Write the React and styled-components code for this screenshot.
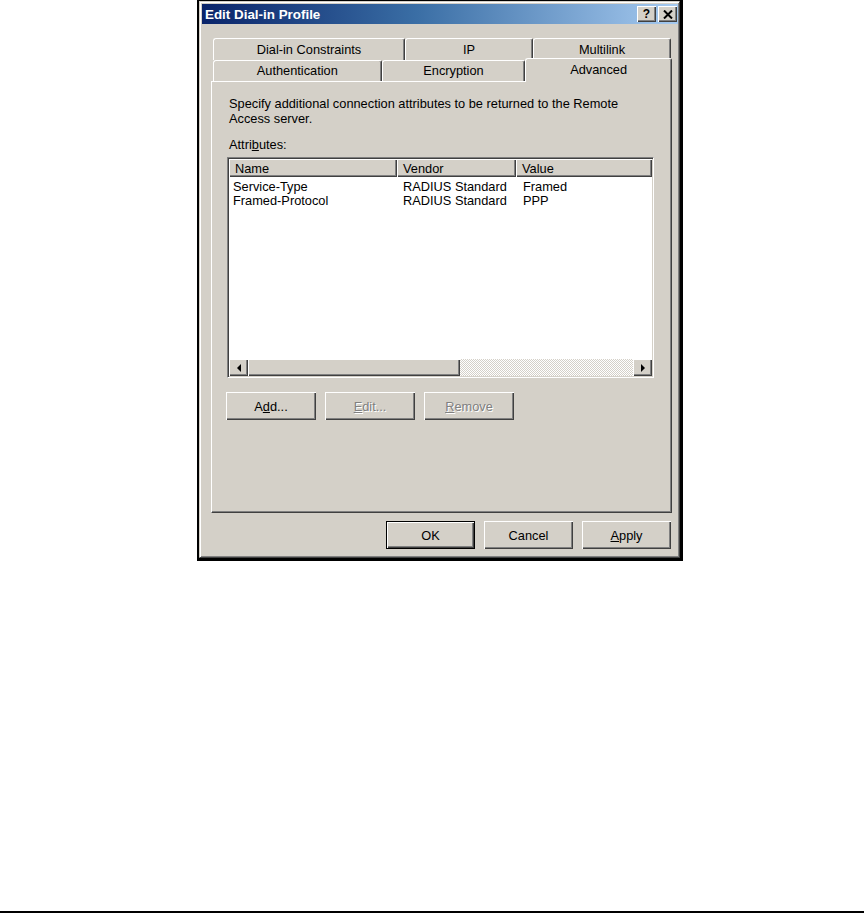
import React from 'react'
import styled, { createGlobalStyle, css } from 'styled-components'

const GlobalStyle = createGlobalStyle`
  html, body {
    margin: 0;
    padding: 0;
    background: #fff;
  }
  body {
    font-family: "Liberation Sans", Arial, sans-serif;
    font-size: 12.8px;
    color: #000;
  }
`

const Page = styled.div`
  height: 914px;
  display: flex;
  flex-direction: column;
  box-sizing: border-box;
`

const Frame = styled.div`
  margin-left: 197px;
  width: 486px;
  box-sizing: border-box;
  border: 2px solid #000;
  border-top-width: 1px;
  border-right-width: 3px;
  border-bottom-width: 3px;
`

const Window = styled.div`
  background: #d4d0c8;
  border: 1px solid;
  border-color: #d4d0c8 #404040 #404040 #d4d0c8;
  box-shadow: inset 1px 1px #fff, inset -1px -1px #808080;
  padding: 2px 1px 1px 2px;
`

const TitleBar = styled.div`
  height: 20px;
  display: flex;
  align-items: center;
  padding: 0 1px 0 3px;
  background: linear-gradient(to right, #0a246a 0%, #3a6ea5 45%, #a6caf0 100%);
`

const TitleText = styled.span`
  flex: 1;
  color: #fff;
  font-weight: bold;
  font-size: 13.4px;
`

const TitleButtons = styled.div`
  display: flex;
  gap: 2px;
`

const TitleButton = styled.div`
  width: 19px;
  height: 16px;
  box-sizing: border-box;
  background: #d4d0c8;
  box-shadow: inset 1px 1px #fff, inset -1px -1px #404040, inset -2px -2px #808080;
  display: flex;
  align-items: center;
  justify-content: center;
  font-weight: bold;
  font-size: 12px;
  line-height: 1;
`

const Body = styled.div`
  padding: 14px 6px 7px 9px;
`

const TabStrip = styled.div`
  display: flex;
  flex-direction: column;
  padding-left: 2px;
`

const TabRow = styled.div`
  display: flex;
  height: ${({ $h }) => $h}px;
`

const Tab = styled.div`
  width: ${({ $w }) => $w}px;
  box-sizing: border-box;
  background: #d4d0c8;
  border-top: 1px solid #fff;
  border-left: 1px solid #fff;
  border-right: 1px solid #404040;
  border-top-left-radius: 3px;
  border-top-right-radius: 2px;
  box-shadow: inset -1px 0 #808080;
  display: flex;
  align-items: center;
  justify-content: center;
  padding-bottom: 1px;
  ${({ $active }) => $active && css`
    position: relative;
    z-index: 1;
    margin-top: -2px;
    height: calc(100% + 3px);
    align-items: flex-start;
    padding-top: 3px;
  `}
`

const Panel = styled.div`
  height: 432px;
  box-sizing: border-box;
  border: 1px solid;
  border-color: #fff #404040 #404040 #fff;
  box-shadow: inset -1px -1px #808080;
  padding: 14px 18px 0 15px;
  display: flex;
  flex-direction: column;
`

const Description = styled.p`
  margin: 0 0 0 2px;
  line-height: 15px;
`

const FieldLabel = styled.div`
  margin: 11px 0 0 2px;
  line-height: 15px;
`

const ListView = styled.div`
  margin-top: 5px;
  width: 427px;
  height: 221px;
  box-sizing: border-box;
  background: #fff;
  border: 1px solid;
  border-color: #808080 #fff #fff #808080;
  box-shadow: inset 1px 1px #404040, inset -1px -1px #d4d0c8;
  padding: 1px;
  display: flex;
  flex-direction: column;
  overflow: hidden;
`

const HeaderRow = styled.div`
  display: flex;
  height: 18px;
  flex-shrink: 0;
`

const HeaderCell = styled.div`
  width: ${({ $w }) => $w}px;
  flex: ${({ $grow }) => ($grow ? 1 : 'none')};
  box-sizing: border-box;
  background: #d4d0c8;
  box-shadow: inset 1px 1px #fff, inset -1px -1px #404040, inset -2px -2px #808080;
  padding-left: 6px;
  display: flex;
  align-items: center;
`

const Rows = styled.div`
  flex: 1;
  padding-top: 2px;
`

const Row = styled.div`
  display: flex;
  height: 14px;
  align-items: center;
`

const Cell = styled.div`
  width: ${({ $w }) => $w}px;
  flex: ${({ $grow }) => ($grow ? 1 : 'none')};
  box-sizing: border-box;
  padding-left: ${({ $pl }) => $pl || 5}px;
  white-space: nowrap;
`

const ScrollBar = styled.div`
  display: flex;
  height: 17px;
  flex-shrink: 0;
`

const ScrollButton = styled.div`
  width: 19px;
  box-sizing: border-box;
  background: #d4d0c8;
  box-shadow: inset 1px 1px #fff, inset -1px -1px #404040, inset -2px -2px #808080;
  display: flex;
  align-items: center;
  justify-content: center;
`

const Thumb = styled.div`
  width: 212px;
  background: #d4d0c8;
  box-shadow: inset 1px 1px #fff, inset -1px -1px #404040, inset -2px -2px #808080;
`

const Track = styled.div`
  flex: 1;
  background: repeating-conic-gradient(#d4d0c8 0 25%, #fff 0 50%) 0 0 / 2px 2px;
`

const ButtonRow = styled.div`
  display: flex;
  gap: 9px;
  margin-top: ${({ $mt }) => $mt}px;
  margin-left: ${({ $ml }) => $ml || 0}px;
  justify-content: ${({ $end }) => ($end ? 'flex-end' : 'flex-start')};
  padding-right: ${({ $end }) => ($end ? 1 : 0)}px;
`

const Button = styled.div`
  width: ${({ $w }) => $w || 90}px;
  height: 28px;
  box-sizing: border-box;
  background: #d4d0c8;
  display: flex;
  align-items: center;
  justify-content: center;
  box-shadow: inset 1px 1px #fff, inset -1px -1px #404040, inset -2px -2px #808080;
  color: ${({ $disabled }) => ($disabled ? '#808080' : '#000')};
  text-shadow: ${({ $disabled }) => ($disabled ? '1px 1px #fff' : 'none')};
  ${({ $default }) => $default && css`
    border: 1px solid #000;
  `}
`

const Rule = styled.div`
  margin-top: auto;
  margin-bottom: 1px;
  height: 2px;
  background: #000;
`

const cols = [168, 119]

const rows = [
  ['Service-Type', 'RADIUS Standard', 'Framed'],
  ['Framed-Protocol', 'RADIUS Standard', 'PPP'],
]

const Arrow = ({ dir }) => (
  <svg width="6" height="8" viewBox="0 0 6 8">
    {dir === 'left'
      ? <polygon points="5,0 5,8 1,4" fill="#000" />
      : <polygon points="1,0 1,8 5,4" fill="#000" />}
  </svg>
)

const CloseGlyph = () => (
  <svg width="10" height="9" viewBox="0 0 10 9">
    <path d="M1 0.5 L9 8.5 M9 0.5 L1 8.5" stroke="#000" strokeWidth="2" />
  </svg>
)

export default function App() {
  return (
    <Page>
      <GlobalStyle />
      <Frame>
        <Window>
          <TitleBar>
            <TitleText>Edit Dial-in Profile</TitleText>
            <TitleButtons>
              <TitleButton>?</TitleButton>
              <TitleButton><CloseGlyph /></TitleButton>
            </TitleButtons>
          </TitleBar>
          <Body>
            <TabStrip>
              <TabRow $h={22}>
                <Tab $w={192}>Dial-in Constraints</Tab>
                <Tab $w={128}>IP</Tab>
                <Tab $w={138}>Multilink</Tab>
              </TabRow>
              <TabRow $h={21}>
                <Tab $w={169}>Authentication</Tab>
                <Tab $w={144}>Encryption</Tab>
                <Tab $w={147} $active>Advanced</Tab>
              </TabRow>
            </TabStrip>
            <Panel>
              <Description>
                Specify additional connection attributes to be returned to the Remote
                <br />
                Access server.
              </Description>
              <FieldLabel>Attri<u>b</u>utes:</FieldLabel>
              <ListView>
                <HeaderRow>
                  <HeaderCell $w={cols[0]}>Name</HeaderCell>
                  <HeaderCell $w={cols[1]}>Vendor</HeaderCell>
                  <HeaderCell $grow>Value</HeaderCell>
                </HeaderRow>
                <Rows>
                  {rows.map((r) => (
                    <Row key={r[0]}>
                      <Cell $w={cols[0]} $pl={4}>{r[0]}</Cell>
                      <Cell $w={cols[1]} $pl={6}>{r[1]}</Cell>
                      <Cell $grow $pl={7}>{r[2]}</Cell>
                    </Row>
                  ))}
                </Rows>
                <ScrollBar>
                  <ScrollButton><Arrow dir="left" /></ScrollButton>
                  <Thumb />
                  <Track />
                  <ScrollButton><Arrow dir="right" /></ScrollButton>
                </ScrollBar>
              </ListView>
              <ButtonRow $mt={14} $ml={-1}>
                <Button>A<u>d</u>d...</Button>
                <Button $disabled><u>E</u>dit...</Button>
                <Button $disabled><u>R</u>emove</Button>
              </ButtonRow>
            </Panel>
            <ButtonRow $mt={8} $end>
              <Button $w={89} $default>OK</Button>
              <Button $w={89}>Cancel</Button>
              <Button $w={89}><u>A</u>pply</Button>
            </ButtonRow>
          </Body>
        </Window>
      </Frame>
      <Rule />
    </Page>
  )
}
